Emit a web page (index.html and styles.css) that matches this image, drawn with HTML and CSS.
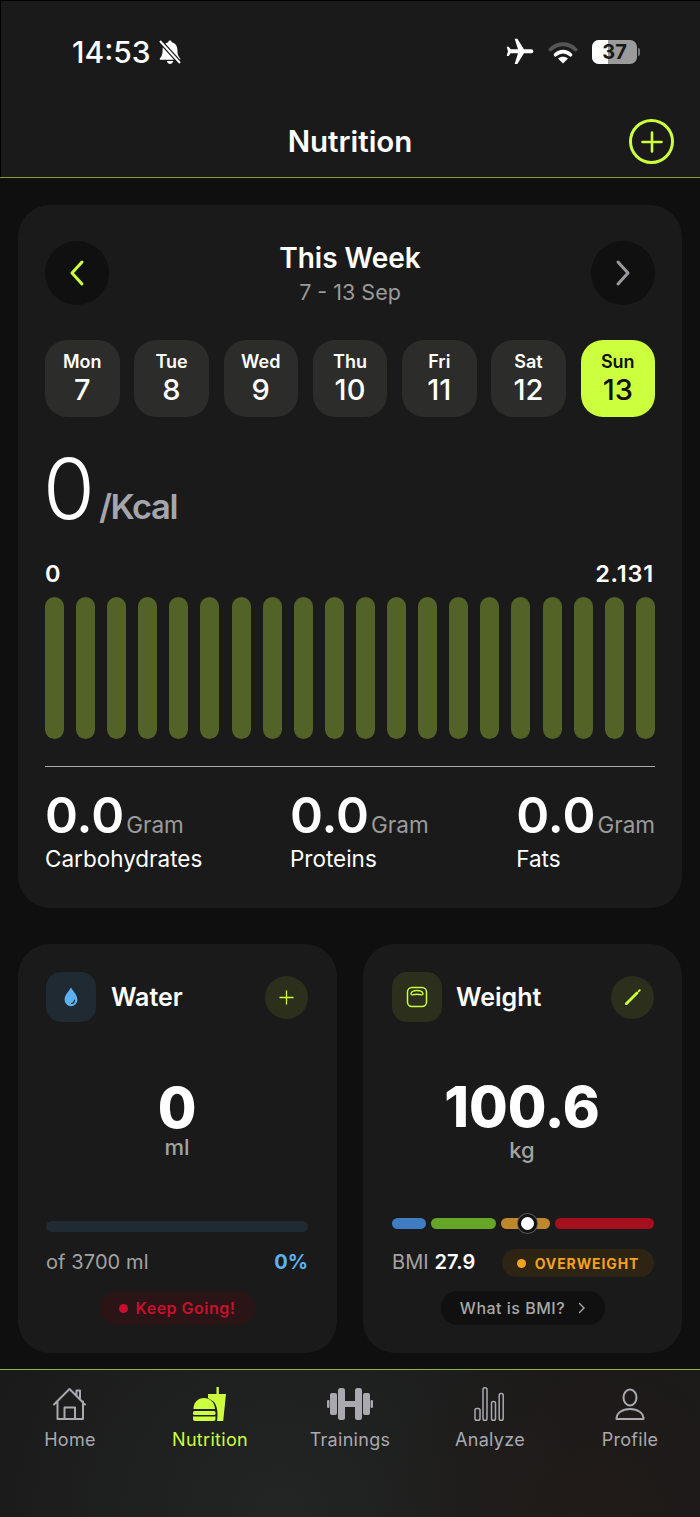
FILE: index.html
```html
<!DOCTYPE html>
<html lang="en">
<head>
<meta charset="utf-8">
<title>Nutrition</title>
<link rel="stylesheet" href="styles.css">
</head>
<body>
<div class="app">
  <header class="header">
    <div class="status">
      <div class="status-left">
        <span class="time">14:53</span>
        <svg class="bell" viewBox="0 0 26 26"><path d="M13 1.500c-1 0-1.700.7-1.700 1.700C7.600 4 5.600 7 5.600 10.800c0 4.500-.8 6.400-2.600 8.400-.6.700-.2 1.600.8 1.600h18.400c1 0 1.400-.9.800-1.600-1.800-2-2.600-3.900-2.600-8.400 0-3.800-2-6.800-5.700-7.600 0-1-.7-1.700-1.700-1.700z" fill="#fff"/><path d="M9.800 22c.3 1.700 1.600 2.900 3.200 2.900s2.900-1.200 3.200-2.900z" fill="#fff"/><path d="M3 2l20 22" stroke="#1a1a1a" stroke-width="4.500"/><path d="M3 2l20 22" stroke="#fff" stroke-width="2"/></svg>
      </div>
      <div class="status-right">
        <svg class="plane" viewBox="0 0 24 24"><path transform="rotate(90 12 12)" d="M21 16v-2l-8-5V3.500c0-.83-.67-1.500-1.500-1.500S10 2.670 10 3.500V9l-8 5v2l8-2.500V19l-2 1.500V22l3.500-1 3.500 1v-1.500L13 19v-5.500l8 2.500z" fill="#fff"/></svg>
        <svg class="wifi" viewBox="0 0 30 23"><path d="M2.500 8.500C9.500 1.500 20.500 1.500 27.500 8.500" fill="none" stroke="#555" stroke-width="3.800" stroke-linecap="round"/><path d="M7.500 13.800c4.500-4.300 10.500-4.300 15 0" fill="none" stroke="#fff" stroke-width="3.600" stroke-linecap="round"/><path d="M15 22.500l-5-5c2.900-2.300 7.100-2.300 10 0z" fill="#fff"/></svg>
        <div class="battery"><div class="battery-body"><div class="battery-fill"></div><span class="battery-text">37</span></div><div class="battery-nub"></div></div>
      </div>
    </div>
    <div class="title-row">
      <h1 class="title">Nutrition</h1>
      <div class="add-btn"><svg class="add-icon" viewBox="0 0 24 24"><path d="M12 2.500v19M2.500 12h19" stroke="#ccff3d" stroke-width="2.600" stroke-linecap="round"/></svg></div>
    </div>
  </header>

  <main class="main">
    <section class="card week-card">
      <div class="week-row">
        <div class="round-btn"><svg class="chev" viewBox="0 0 18 28"><path d="M14 3L4 14l10 11" fill="none" stroke="#ccff3d" stroke-width="3" stroke-linecap="round" stroke-linejoin="round"/></svg></div>
        <div class="week-title"><div class="week-name">This Week</div><div class="week-range">7 - 13 Sep</div></div>
        <div class="round-btn"><svg class="chev" viewBox="0 0 18 28"><path d="M4 3l10 11L4 25" fill="none" stroke="#9a9aa0" stroke-width="3" stroke-linecap="round" stroke-linejoin="round"/></svg></div>
      </div>
      <div class="days">
        <div class="day"><span class="day-name">Mon</span><span class="day-num">7</span></div>
        <div class="day"><span class="day-name">Tue</span><span class="day-num">8</span></div>
        <div class="day"><span class="day-name">Wed</span><span class="day-num">9</span></div>
        <div class="day"><span class="day-name">Thu</span><span class="day-num">10</span></div>
        <div class="day"><span class="day-name">Fri</span><span class="day-num">11</span></div>
        <div class="day"><span class="day-name">Sat</span><span class="day-num">12</span></div>
        <div class="day day-active"><span class="day-name">Sun</span><span class="day-num">13</span></div>
      </div>
      <div class="kcal-row"><span class="kcal-num">0</span><span class="kcal-unit">/Kcal</span></div>
      <div class="range-row"><span>0</span><span class="range-max">2.131</span></div>
      <div class="bars">
        <i class="bar"></i><i class="bar"></i><i class="bar"></i><i class="bar"></i><i class="bar"></i>
        <i class="bar"></i><i class="bar"></i><i class="bar"></i><i class="bar"></i><i class="bar"></i>
        <i class="bar"></i><i class="bar"></i><i class="bar"></i><i class="bar"></i><i class="bar"></i>
        <i class="bar"></i><i class="bar"></i><i class="bar"></i><i class="bar"></i><i class="bar"></i>
      </div>
      <div class="divider"></div>
      <div class="macros">
        <div class="macro"><div class="macro-top"><span class="macro-val">0.0</span><span class="macro-unit">Gram</span></div><div class="macro-label">Carbohydrates</div></div>
        <div class="macro"><div class="macro-top"><span class="macro-val">0.0</span><span class="macro-unit">Gram</span></div><div class="macro-label">Proteins</div></div>
        <div class="macro"><div class="macro-top"><span class="macro-val">0.0</span><span class="macro-unit">Gram</span></div><div class="macro-label">Fats</div></div>
      </div>
    </section>

    <div class="cards">
      <section class="card small-card small-water">
        <div class="small-head">
          <div class="tile tile-blue"><svg class="tile-icon" viewBox="0 0 20 24"><path d="M10 1.500C7.500 6 3 9.500 3 15a7 7 0 0 0 14 0c0-5.500-4.500-9-7-13.500z" fill="#5cb2f0"/><path d="M13.800 15.500a3.800 3.800 0 0 1-3.300 3.600" fill="none" stroke="#1f2a33" stroke-width="1.300" stroke-linecap="round"/></svg></div>
          <span class="small-title">Water</span>
          <div class="mini-btn"><svg class="mini-icon" viewBox="0 0 16 16"><path d="M8 .5v15M.5 8h15" stroke="#ccff3d" stroke-width="1.400"/></svg></div>
        </div>
        <div class="value value-water">0</div>
        <div class="unit unit-water">ml</div>
        <div class="water-bar"></div>
        <div class="info-row"><span class="of">of 3700 ml</span><span class="pct">0%</span></div>
        <div class="pill-row"><div class="pill pill-red"><i class="dot dot-red"></i>Keep Going!</div></div>
      </section>

      <section class="card small-card small-weight">
        <div class="small-head">
          <div class="tile tile-green"><svg class="tile-icon" viewBox="0 0 22 22"><rect x="1.500" y="1.500" width="19" height="19" rx="4.500" fill="none" stroke="#ccff3d" stroke-width="1.500"/><path d="M5 7.500C5.500 5.300 8 4.500 11 4.500s5.500.8 6 3c.2 1-.6 1.500-1.500 1.300C13.500 8.300 8.500 8.300 6.500 8.800 5.600 9 4.800 8.500 5 7.500z" fill="none" stroke="#ccff3d" stroke-width="1.300"/></svg></div>
          <span class="small-title">Weight</span>
          <div class="mini-btn"><svg class="pen-icon" viewBox="0 0 16 16"><path d="M1.300 14.700L12 4" stroke="#ccff3d" stroke-width="2.800" stroke-linecap="round"/><path d="M13.700 2.300l1-1" stroke="#ccff3d" stroke-width="2" stroke-linecap="round"/></svg></div>
        </div>
        <div class="value value-weight">100.6</div>
        <div class="unit unit-weight">kg</div>
        <div class="scale">
          <i class="seg seg-blue"></i><i class="seg seg-green"></i>
          <i class="seg seg-orange"><b class="marker"></b></i><i class="seg seg-red"></i>
        </div>
        <div class="info-row info-bmi">
          <span class="of">BMI <b class="bmi-val">27.9</b></span>
          <div class="pill pill-orange"><i class="dot dot-orange"></i>OVERWEIGHT</div>
        </div>
        <div class="pill-row"><div class="pill pill-dark">What is BMI?<svg class="pill-chev" viewBox="0 0 8 12"><path d="M1.500 1.500L6 6l-4.500 4.500" fill="none" stroke="#a8a8a8" stroke-width="1.400" stroke-linecap="round"/></svg></div></div>
      </section>
    </div>
  </main>

  <nav class="nav">
    <div class="nav-item">
      <svg class="nav-icon" viewBox="0 0 36 34"><path d="M2 17.500L17.500 2 33 17.500M5.500 14.500V32h25.500V14.500M12.500 32V20.500h10.500V32M24.500 8.500V3.500h3.500v8.500" fill="none" stroke="#a9a9af" stroke-width="2" stroke-linejoin="round" stroke-linecap="round"/></svg>
      <span>Home</span>
    </div>
    <div class="nav-item nav-active">
      <svg class="nav-icon" viewBox="0 0 36 34"><path d="M1.500 22C1.500 15 6 11 12 11c6 0 10.500 4 11 11z" fill="#ccff3d"/><rect x="1" y="24" width="22.500" height="4" rx="1.500" fill="#ccff3d"/><path d="M1 29.500h22.500V32a2 2 0 0 1-2 2H3a2 2 0 0 1-2-2z" fill="#ccff3d"/><path d="M16 7h18l-2.800 27H25c1-6 1-14-3-19-1.500-1.700-4-2-6-4z" fill="#ccff3d"/><rect x="24.500" y="0" width="2.300" height="8" fill="#ccff3d"/></svg>
      <span>Nutrition</span>
    </div>
    <div class="nav-item">
      <svg class="nav-icon nav-icon-wide" viewBox="0 0 46 34"><g fill="#a9a9af"><rect x="0" y="13" width="2.500" height="8" rx="1.200"/><rect x="3" y="6" width="7" height="22" rx="2"/><rect x="11" y="1" width="7" height="32" rx="2.500"/><rect x="17.500" y="14" width="11" height="6"/><rect x="28" y="1" width="7" height="32" rx="2.500"/><rect x="36" y="6" width="7" height="22" rx="2"/><rect x="43.500" y="13" width="2.500" height="8" rx="1.200"/></g></svg>
      <span>Trainings</span>
    </div>
    <div class="nav-item">
      <svg class="nav-icon" viewBox="0 0 36 34"><g fill="none" stroke="#a9a9af" stroke-width="1.500"><rect x="3" y="21.500" width="5" height="11.700" rx="1.800"/><rect x="11" y=".8" width="4" height="32.400" rx="1.800"/><rect x="19.500" y="14.500" width="4" height="18.700" rx="1.800"/><rect x="27.200" y="6.500" width="4" height="26.700" rx="1.800"/></g></svg>
      <span>Analyze</span>
    </div>
    <div class="nav-item">
      <svg class="nav-icon" viewBox="0 0 36 34"><g fill="none" stroke="#a9a9af" stroke-width="2"><ellipse cx="18" cy="10.500" rx="6.500" ry="8"/><path d="M4.500 32c0-6 5.500-10 13.500-10s13.500 4 13.500 10z" stroke-linejoin="round"/></g></svg>
      <span>Profile</span>
    </div>
  </nav>
</div>
</body>
</html>
```

FILE: styles.css
```css
* { box-sizing: border-box; }
html, body { margin: 0; padding: 0; }
body { background: #0f0f0f; font-family: Inter, "Liberation Sans", sans-serif; color: #fff; }
.app { width: 700px; height: 1517px; display: flex; flex-direction: column; overflow: hidden; background: #0f0f0f; }

.header { height: 178px; background: #1a1a1a; border-bottom: 1px solid #87993c; box-shadow: inset 1px 1px 0 #000; padding: 34px 26px 0 72px; }
.status { height: 36px; display: flex; justify-content: space-between; align-items: center; padding-right: 34px; }
.status-left { display: flex; align-items: center; gap: 6px; }
.time { font-size: 30px; font-weight: 500; line-height: 36px; }
.bell { width: 26px; height: 26px; }
.status-right { display: flex; align-items: center; }
.plane { width: 32px; height: 32px; }
.wifi { width: 30px; height: 23px; margin-left: 12px; }
.battery { display: flex; align-items: center; margin-left: 14px; }
.battery-body { width: 45px; height: 24px; border-radius: 7px; background: #9b9b9b; position: relative; overflow: hidden; display: flex; align-items: center; justify-content: center; }
.battery-fill { position: absolute; left: 0; top: 0; bottom: 0; width: 16px; background: #fff; }
.battery-text { position: relative; color: #1a1a1a; font-size: 20px; font-weight: 700; line-height: 24px; }
.battery-nub { width: 2px; height: 8px; background: #777; border-radius: 0 2px 2px 0; margin-left: 1px; }

.title-row { margin-top: 49px; height: 45px; display: flex; align-items: center; justify-content: flex-end; position: relative; }
.title { position: absolute; left: 0; right: 46px; margin: 0; text-align: center; font-size: 29.500px; font-weight: 600; line-height: 47px; }
.add-btn { width: 45px; height: 45px; border: 3.500px solid #ccff3d; border-radius: 50%; display: flex; align-items: center; justify-content: center; }
.add-icon { width: 24px; height: 24px; }

.main { padding: 27px 18px 16px; }
.card { background: #1a1a1a; border-radius: 32px; }
.week-card { padding: 36px 27px 36px; }
.week-row { height: 64px; display: flex; justify-content: space-between; align-items: flex-start; }
.round-btn { width: 64px; height: 64px; border-radius: 50%; background: #101010; display: flex; align-items: center; justify-content: center; }
.chev { width: 18px; height: 28px; }
.week-title { text-align: center; }
.week-name { font-size: 28px; font-weight: 600; line-height: 34px; }
.week-range { font-size: 21.500px; color: #9a9a9a; line-height: 26px; margin-top: 4px; }

.days { display: flex; justify-content: space-between; margin-top: 35px; }
.day { width: 74.500px; height: 77px; border-radius: 22px; background: #2c2c2a; display: flex; flex-direction: column; align-items: center; padding-top: 11px; }
.day-name { font-size: 18px; font-weight: 600; line-height: 22px; }
.day-num { font-size: 29px; font-weight: 500; line-height: 34px; }
.day-active { background: #ccff3d; color: #111; }

.kcal-row { display: flex; align-items: baseline; margin-top: 30px; }
.kcal-num { font-size: 84px; font-weight: 300; line-height: 84px; margin-left: -2px; }
.kcal-unit { font-size: 34.500px; font-weight: 600; color: #a5a5ad; letter-spacing: -1.400px; margin-left: 4px; }

.range-row { display: flex; justify-content: space-between; font-size: 23.500px; font-weight: 600; line-height: 26px; margin-top: 30px; }
.range-max { letter-spacing: .8px; margin-right: 1px; }
.bars { display: flex; justify-content: space-between; margin-top: 10px; }
.bar { width: 19px; height: 142px; border-radius: 10px; background: #536327; }
.divider { height: 1px; background: #a9a9a9; margin-top: 27px; }
.macros { display: flex; justify-content: space-between; margin-top: 23px; }
.macro-top { display: flex; align-items: baseline; gap: 2px; }
.macro-val { font-size: 50px; font-weight: 600; line-height: 50px; }
.macro-unit { font-size: 22.500px; color: #9a9a9a; }
.macro-label { font-size: 22.500px; line-height: 26px; margin-top: 6px; }

.cards { display: grid; grid-template-columns: 319px 319px; justify-content: space-between; margin-top: 36px; }
.small-card { padding: 28px; height: 409px; }
.small-water { padding-right: 29px; }
.small-weight { padding-left: 29px; }
.small-head { height: 50px; display: flex; align-items: center; }
.tile { width: 50px; height: 50px; border-radius: 15px; display: flex; align-items: center; justify-content: center; }
.tile-blue { background: #1f2a33; }
.tile-green { background: #2b2f1b; }
.tile-icon { width: 22px; height: 22px; }
.small-title { font-size: 25px; font-weight: 600; margin-left: 15px; flex: 1; }
.small-weight .small-title { margin-left: 14px; }
.mini-btn { width: 43px; height: 43px; border-radius: 50%; background: #2b2f1b; display: flex; align-items: center; justify-content: center; }
.mini-icon { width: 15px; height: 15px; }
.pen-icon { width: 16px; height: 16px; }

.value { text-align: center; font-size: 56px; font-weight: 800; line-height: 56px; }
.value-water { margin-top: 58px; }
.value-weight { margin-top: 57px; padding-right: 2px; }
.unit { text-align: center; font-size: 22px; font-weight: 500; color: #a3a3a3; line-height: 26px; }
.unit-water { margin-top: -2px; }
.unit-weight { margin-top: 2px; padding-right: 2px; }

.water-bar { height: 11px; border-radius: 6px; background: #1f2a33; margin-top: 61px; }
.scale { display: flex; gap: 5px; margin-top: 55px; height: 11px; }
.seg { height: 11px; border-radius: 6px; display: block; }
.seg-blue { width: 34px; background: #3f7cc0; }
.seg-green { width: 65px; background: #65a626; }
.seg-orange { width: 49px; background: #bf872b; position: relative; }
.seg-red { width: 99px; background: #a50f1e; }
.marker { position: absolute; left: 17px; top: -4px; width: 19px; height: 19px; border-radius: 50%; background: #fff; border: 3px solid #111; box-shadow: 0 0 0 1px #555; }

.info-row { display: flex; justify-content: space-between; align-items: center; height: 28px; margin-top: 17px; font-size: 20px; }
.info-bmi { margin-top: 20px; }
.of { color: #a3a3a3; padding-bottom: 2px; letter-spacing: .1px; }
.pct { color: #5cb2f0; font-weight: 700; padding-bottom: 2px; }
.bmi-val { color: #fff; font-weight: 600; }

.pill-row { display: flex; justify-content: center; margin-top: 14px; }
.pill { display: flex; align-items: center; border-radius: 17px; font-weight: 600; white-space: nowrap; }
.pill-red { width: 155px; height: 34px; background: #2a1416; color: #c8102e; font-size: 16px; letter-spacing: .5px; justify-content: center; gap: 8px; }
.pill-orange { width: 152px; height: 28px; background: #2d2414; color: #f2a31f; font-size: 14px; font-weight: 700; letter-spacing: .9px; justify-content: center; gap: 9px; }
.pill-dark { width: 164px; height: 34px; background: #101010; color: #a8a8a8; font-size: 16px; font-weight: 500; letter-spacing: .5px; justify-content: center; gap: 13px; }
.pill-chev { width: 8px; height: 12px; }
.dot { width: 9px; height: 9px; border-radius: 50%; display: block; }
.dot-red { background: #c8102e; }
.dot-orange { background: #f2a31f; }

.nav { flex: 1; border-top: 1px solid #98b03c; display: flex; background: radial-gradient(circle at 85% 100%, #211b18, transparent 35%), radial-gradient(circle at 40% 100%, #232524, #1a1a1a 70%); padding-top: 17px; }
.nav-item { width: 140px; display: flex; flex-direction: column; align-items: center; color: #a9a9af; font-size: 18px; line-height: 22px; letter-spacing: .3px; }
.nav-active { color: #ccff3d; }
.nav-icon { width: 36px; height: 34px; margin-bottom: 8px; }
.nav-icon-wide { width: 46px; }
```
